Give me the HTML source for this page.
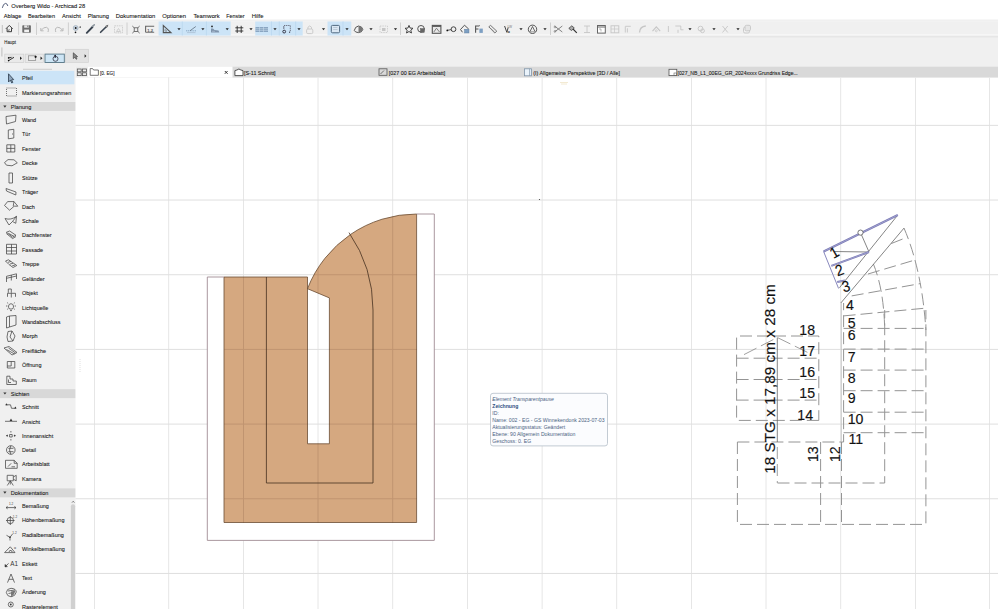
<!DOCTYPE html><html><head><meta charset="utf-8"><style>body{margin:0;width:998px;height:609px;overflow:hidden;background:#fff}svg{display:block;font-family:"Liberation Sans",sans-serif}</style></head><body>
<svg width="998" height="609" viewBox="0 0 998 609">
<rect x="0" y="0" width="998" height="19.5" fill="#ffffff"/>
<rect x="0" y="19.5" width="998" height="47.5" fill="#f0f0f0"/>
<line x1="0" y1="21.8" x2="998" y2="21.8" stroke="#f4f4f4" stroke-width="0.8"/>
<line x1="0" y1="34.8" x2="998" y2="34.8" stroke="#f8f8f8" stroke-width="1"/>
<line x1="0" y1="36.8" x2="998" y2="36.8" stroke="#e2e2e2" stroke-width="1"/>
<rect x="0" y="67" width="75.5" height="542" fill="#f0f0f0"/>
<rect x="75.5" y="66.7" width="922.5" height="10.9" fill="#d9d9d9"/>
<rect x="75.5" y="66.6" width="157" height="11" fill="#ffffff"/>
<path d="M2.3,7.9 Q3.3,3.4 5.6,3.4 Q7.4,3.6 7.8,6" fill="none" stroke="#46506e" stroke-width="0.9"/>
<text x="11.3" y="8.1" font-size="6.0" fill="#111" textLength="73.9" lengthAdjust="spacingAndGlyphs" stroke="#111" stroke-width="0.08" >Overberg Wido - Archicad 28</text>
<text x="3.8" y="18" font-size="6.1" fill="#111" textLength="17.5" lengthAdjust="spacingAndGlyphs" stroke="#111" stroke-width="0.08" >Ablage</text>
<text x="28" y="18" font-size="6.1" fill="#111" textLength="27.1" lengthAdjust="spacingAndGlyphs" stroke="#111" stroke-width="0.08" >Bearbeiten</text>
<text x="61.9" y="18" font-size="6.1" fill="#111" textLength="19.0" lengthAdjust="spacingAndGlyphs" stroke="#111" stroke-width="0.08" >Ansicht</text>
<text x="87.7" y="18" font-size="6.1" fill="#111" textLength="21.3" lengthAdjust="spacingAndGlyphs" stroke="#111" stroke-width="0.08" >Planung</text>
<text x="115.7" y="18" font-size="6.1" fill="#111" textLength="39.6" lengthAdjust="spacingAndGlyphs" stroke="#111" stroke-width="0.08" >Dokumentation</text>
<text x="162.3" y="18" font-size="6.1" fill="#111" textLength="23.8" lengthAdjust="spacingAndGlyphs" stroke="#111" stroke-width="0.08" >Optionen</text>
<text x="193.4" y="18" font-size="6.1" fill="#111" textLength="26.3" lengthAdjust="spacingAndGlyphs" stroke="#111" stroke-width="0.08" >Teamwork</text>
<text x="226.2" y="18" font-size="6.1" fill="#111" textLength="18.5" lengthAdjust="spacingAndGlyphs" stroke="#111" stroke-width="0.08" >Fenster</text>
<text x="251.7" y="18" font-size="6.1" fill="#111" textLength="11.7" lengthAdjust="spacingAndGlyphs" stroke="#111" stroke-width="0.08" >Hilfe</text>
<text x="4.3" y="43.8" font-size="5.0" fill="#111" textLength="11.6" lengthAdjust="spacingAndGlyphs" stroke="#111" stroke-width="0.06" >Haupt</text>
<line x1="1.9" y1="47.4" x2="1.9" y2="56.5" stroke="#b8b8b8" stroke-width="0.9"/>
<rect x="4.8" y="54.1" width="19" height="8.4" fill="#e9e9e9" stroke="#cfcfcf" stroke-width="0.7"/>
<rect x="25.2" y="54.1" width="18.1" height="8.4" fill="#e9e9e9" stroke="#cfcfcf" stroke-width="0.7"/>
<rect x="45" y="54.1" width="19.3" height="8.4" fill="#cde5f5" stroke="#567484" stroke-width="0.9"/>
<rect x="65.5" y="49.3" width="23.1" height="13.2" fill="#e2e2e2" stroke="#d2d2d2" stroke-width="0.7"/>
<rect x="8.5" y="55.3" width="5" height="3.6" fill="#dedede"/><path d="M8.6,60.6 L14,57.3 M8.4,57.9 L11.5,57.4" stroke="#222" stroke-width="0.9" fill="none"/><circle cx="8.6" cy="57.9" r="0.8" fill="#111"/><circle cx="8.6" cy="60.6" r="0.8" fill="#111"/>
<path d="M20,56.5 L22,58.3 L20,60 Z" fill="#222"/>
<rect x="28.5" y="55.8" width="7.2" height="4.8" fill="none" stroke="#888" stroke-width="0.7"/><circle cx="35.6" cy="56.8" r="1.1" fill="#111"/>
<path d="M40.5,56.5 L42.5,58.3 L40.5,60 Z" fill="#222"/>
<circle cx="55.5" cy="58.8" r="2.5" fill="none" stroke="#334" stroke-width="0.8"/><path d="M55.2,55 L55.2,58" stroke="#223" stroke-width="1"/><circle cx="55.2" cy="55.6" r="0.8" fill="#223"/>
<path d="M73.3,52.8 L73.3,58.6 L74.8,57.3 L76.2,59.3 L77,58.8 L75.8,56.8 L77.6,56.6 Z" fill="#8a8a8a" stroke="#333" stroke-width="0.6"/>
<path d="M84.6,54.3 L86.4,56 L84.6,57.7 Z" fill="#222"/>
<line x1="23" y1="69.3" x2="52" y2="69.3" stroke="#c4c4c4" stroke-width="0.8"/>
<line x1="2.3" y1="25" x2="2.3" y2="33" stroke="#bbb" stroke-width="0.9"/>
<line x1="18.6" y1="22.5" x2="18.6" y2="35" stroke="#c6c6c6" stroke-width="0.8"/>
<line x1="36.5" y1="22.5" x2="36.5" y2="35" stroke="#c6c6c6" stroke-width="0.8"/>
<line x1="68.4" y1="22.5" x2="68.4" y2="35" stroke="#c6c6c6" stroke-width="0.8"/>
<line x1="127" y1="22.5" x2="127" y2="35" stroke="#c6c6c6" stroke-width="0.8"/>
<line x1="400.5" y1="22.5" x2="400.5" y2="35" stroke="#c6c6c6" stroke-width="0.8"/>
<line x1="550.5" y1="22.5" x2="550.5" y2="35" stroke="#c6c6c6" stroke-width="0.8"/>
<rect x="158.6" y="21.5" width="72.1" height="14" fill="#cce4f7"/>
<rect x="255.2" y="21.5" width="47.5" height="14" fill="#cce4f7"/>
<rect x="327.5" y="21.5" width="23.8" height="14" fill="#cce4f7"/>
<line x1="182.3" y1="21.5" x2="182.3" y2="35.5" stroke="#b7d5ee" stroke-width="0.7"/>
<line x1="206.4" y1="21.5" x2="206.4" y2="35.5" stroke="#b7d5ee" stroke-width="0.7"/>
<line x1="271.5" y1="21.5" x2="271.5" y2="35.5" stroke="#b7d5ee" stroke-width="0.7"/>
<line x1="279.3" y1="21.5" x2="279.3" y2="35.5" stroke="#b7d5ee" stroke-width="0.7"/>
<line x1="295.6" y1="21.5" x2="295.6" y2="35.5" stroke="#b7d5ee" stroke-width="0.7"/>
<line x1="343" y1="21.5" x2="343" y2="35.5" stroke="#b7d5ee" stroke-width="0.7"/>
<path d="M177.4,28.3 L180.6,28.3 L179,30.3 Z" fill="#222"/>
<path d="M201.3,28.3 L204.5,28.3 L202.9,30.3 Z" fill="#222"/>
<path d="M225.6,28.3 L228.79999999999998,28.3 L227.2,30.3 Z" fill="#222"/>
<path d="M249.4,28.3 L252.6,28.3 L251,30.3 Z" fill="#222"/>
<path d="M273.4,28.3 L276.6,28.3 L275,30.3 Z" fill="#222"/>
<path d="M297.4,28.3 L300.6,28.3 L299,30.3 Z" fill="#222"/>
<path d="M321.9,28.3 L325.1,28.3 L323.5,30.3 Z" fill="#222"/>
<path d="M345.4,28.3 L348.6,28.3 L347,30.3 Z" fill="#222"/>
<path d="M369.4,28.3 L372.6,28.3 L371,30.3 Z" fill="#222"/>
<path d="M393.9,28.3 L397.1,28.3 L395.5,30.3 Z" fill="#222"/>
<path d="M519.4,28.3 L522.6,28.3 L521,30.3 Z" fill="#222"/>
<path d="M543.4,28.3 L546.6,28.3 L545,30.3 Z" fill="#222"/>
<path d="M688.4,28.3 L691.6,28.3 L690,30.3 Z" fill="#222"/>
<path d="M712.4,28.3 L715.6,28.3 L714,30.3 Z" fill="#222"/>
<path d="M736.4,28.3 L739.6,28.3 L738,30.3 Z" fill="#222"/>
<path d="M5.9,28.8 L9.3,25.4 L12.7,28.8 M7.1,28.2 L7.1,31.7 L11.5,31.7 L11.5,28.2" fill="none" stroke="#3a3a3a" stroke-width="1"/><path d="M8.6,31.5 L8.6,29.8 L10,29.8" fill="none" stroke="#555" stroke-width="0.6"/>
<rect x="22.3" y="25.2" width="8.6" height="7.6" rx="0.7" fill="#6e6e6e"/><rect x="24.2" y="25.3" width="4.6" height="2.4" fill="#e6e6e6"/><rect x="27.3" y="25.6" width="1" height="1.6" fill="#6e6e6e"/><rect x="24.2" y="29.6" width="4.8" height="2.6" fill="#f2f2f2"/>
<path d="M40.8,28 L40.8,30.8 L43.6,30.8 M41,30.6 Q43.5,26.8 46.5,27.3 Q49.3,28.3 48,32" fill="none" stroke="#b9b9b9" stroke-width="1"/>
<path d="M63,28 L63,30.8 L60.2,30.8 M62.8,30.6 Q60.3,26.8 57.3,27.3 Q54.5,28.3 55.8,32" fill="none" stroke="#b9b9b9" stroke-width="1"/>
<circle cx="75.7" cy="28" r="2.5" fill="#c8d4e0" stroke="#8a9aaa" stroke-width="0.5"/><circle cx="75.7" cy="28" r="0.9" fill="#111"/><circle cx="75.5" cy="32.4" r="0.8" fill="#111"/><path d="M79.2,27.2 L80.8,27" stroke="#333" stroke-width="0.7"/><path d="M80.5,26.5 L80.5,27.8" stroke="#333" stroke-width="0.6"/>
<path d="M86.8,32.8 L92.5,27" stroke="#3a4450" stroke-width="1.9" stroke-linecap="round"/><path d="M92.3,26.3 L94.3,24.8" stroke="#8a939c" stroke-width="1.5" stroke-linecap="round"/>
<path d="M100.6,32.3 L106,27" stroke="#3a4450" stroke-width="1.6" stroke-linecap="round"/><path d="M105.6,26.2 L108.2,25.2 M106.5,27.7 L107.8,26.2" stroke="#555" stroke-width="0.9"/>
<path d="M114.5,25.8 L122.5,25.8 L122.5,32.8 L114.5,32.8 Z" fill="none" stroke="#c6c6c6" stroke-width="0.8" stroke-dasharray="1.5,0.8"/><path d="M116.5,31.5 L118.5,28.5 L120.5,31.5 Z" fill="none" stroke="#c6c6c6" stroke-width="0.8"/>
<rect x="134.2" y="27.8" width="3.6" height="3.6" fill="none" stroke="#555" stroke-width="0.8"/><path d="M132.3,26 L134.2,27.8 M139.7,26 L137.8,27.8 M132.3,33.2 L134.2,31.4 M139.7,33.2 L137.8,31.4" stroke="#555" stroke-width="0.8"/>
<path d="M145.6,32.3 L145.6,26.3 L154.2,26.3" fill="none" stroke="#666" stroke-width="1.1"/><path d="M145.6,32.3 L154.2,32.3" stroke="#666" stroke-width="0.9"/><text x="147.3" y="31.6" font-size="4.1" fill="#555" font-weight="bold">1.2</text>
<path d="M163.3,25.6 L163.3,32.6 L171,32.6 Z" fill="none" stroke="#555" stroke-width="1.1"/><path d="M164.9,29.3 L164.9,31.2 L167,31.2 Z" fill="none" stroke="#777" stroke-width="0.6"/>
<path d="M186,30.8 L196,30.8" stroke="#6e8fb0" stroke-width="0.7" stroke-dasharray="1.2,0.6"/><path d="M187,32.6 L195.5,32.6" stroke="#a0b4c8" stroke-width="0.6"/><path d="M190,30.8 L195.8,26.5" stroke="#6a7a8a" stroke-width="0.9"/>
<circle cx="212" cy="26.4" r="0.9" fill="#222"/><path d="M211,28.5 L213,28.5 L214.5,30 L218.5,30.5 L219.3,32.5 L211,32.5 Z" fill="#8094ac"/><path d="M212,31.3 L215,31.3" stroke="#c5d5e5" stroke-width="0.5"/>
<path d="M237.2,25.8 L237.2,33 M241.2,25.8 L241.2,33 M235.3,27.8 L243.3,27.8 M235.3,31 L243.3,31" stroke="#2a2a2a" stroke-width="0.9"/>
<rect x="255.5" y="27" width="12.5" height="5" fill="#8aa6c2"/><path d="M255.5,28.7 L268,28.7 M255.5,30.4 L268,30.4 M259.5,27 L259.5,32 M263.5,27 L263.5,32" stroke="#cfe0f0" stroke-width="0.5"/>
<path d="M284,25.5 L290.3,25.5 L290.3,32" fill="none" stroke="#556" stroke-width="0.8" stroke-dasharray="1.3,0.8"/><path d="M283.8,26 L283.8,29" stroke="#556" stroke-width="0.8"/><circle cx="284.2" cy="31.6" r="1.4" fill="none" stroke="#334" stroke-width="1"/><circle cx="289.6" cy="32.2" r="0.6" fill="#334"/>
<rect x="306.6" y="29" width="6.2" height="4.6" rx="1.2" fill="none" stroke="#c6c6c6" stroke-width="0.9"/><path d="M307.9,29 L307.9,27.3 Q309.7,24.6 311.5,27.3 L311.5,29" fill="none" stroke="#c6c6c6" stroke-width="0.9"/>
<rect x="331.3" y="25.4" width="8.3" height="7.4" rx="1.2" fill="#dbe8f4" stroke="#4f6880" stroke-width="1"/><path d="M333.2,27.5 L337.5,27.5 M333.2,29.5 L337.5,29.5" stroke="#9ab" stroke-width="0.5"/>
<path d="M354.3,30.5 Q355,26.5 358.5,26 Q362.5,26.5 362.8,29.5 Q362,32.5 358.5,32.6 Q355,32.4 354.3,30.5 Z" fill="none" stroke="#444" stroke-width="0.9"/><path d="M358.5,26.3 Q362.3,26.8 362.5,29.5 Q361.8,32.2 358.5,32.3 Z" fill="#777"/>
<rect x="380" y="26" width="7.5" height="6.5" fill="none" stroke="#c6c6c6" stroke-width="0.8" stroke-dasharray="1.4,1"/><rect x="382" y="28" width="3.5" height="3" fill="#c6c6c6"/>
<polygon points="409.00,25.40 410.12,28.06 412.99,28.30 410.81,30.19 411.47,33.00 409.00,31.50 406.53,33.00 407.19,30.19 405.01,28.30 407.88,28.06" fill="none" stroke="#333" stroke-width="0.9" stroke-linejoin="round"/>
<circle cx="421" cy="28.8" r="3.3" fill="none" stroke="#555" stroke-width="1"/><rect x="420.5" y="28.6" width="3.8" height="3.8" fill="#666" stroke="#444" stroke-width="0.4"/>
<rect x="432.3" y="25.4" width="8.6" height="7.9" fill="#e8e8e8" stroke="#555" stroke-width="1.1"/><path d="M432.3,26.3 L440.9,26.3" stroke="#555" stroke-width="1.2"/><path d="M433.8,32 L436.5,28.2 L439.5,32" fill="none" stroke="#666" stroke-width="0.8"/>
<circle cx="453.5" cy="29.2" r="2.4" fill="none" stroke="#333" stroke-width="0.9"/><path d="M447.5,30.3 L451.2,29.6" stroke="#333" stroke-width="0.8"/><circle cx="447.3" cy="30.4" r="0.9" fill="#111"/>
<path d="M460.5,29.5 L464.5,25.2 L468.8,29.2 M460.5,29.5 L462.5,32.3" fill="none" stroke="#444" stroke-width="0.9"/><rect x="464.5" y="29.2" width="4.5" height="3.8" fill="#7d9fc2" stroke="#5a7a9a" stroke-width="0.4"/>
<path d="M475.6,32.7 L475.6,26 L479.3,26 M475.6,29 L478.5,29" fill="none" stroke="#555" stroke-width="1.1"/><path d="M479,25.5 L479.8,25.5" stroke="#555" stroke-width="0.7"/><rect x="479.4" y="28.6" width="3.4" height="4.3" fill="#7d9fc2"/>
<path d="M488.8,26.8 L490.6,25.4 L496.8,31.2 L494.8,33 Z" fill="none" stroke="#666" stroke-width="0.9"/><path d="M490.5,28 L494.5,31.5" stroke="#999" stroke-width="0.5"/>
<path d="M504.6,26 L506.8,32.3 L508.2,27.5" fill="none" stroke="#444" stroke-width="1"/><text x="507.4" y="28.3" font-size="3.2" fill="#777">LW</text><text x="507.6" y="32.6" font-size="3.8" fill="#333" font-weight="bold">α</text>
<circle cx="532.5" cy="29.3" r="4.2" fill="none" stroke="#444" stroke-width="0.9"/><path d="M530,31.6 L532.5,26.5 L535,31.6" fill="none" stroke="#444" stroke-width="0.8"/><path d="M530,31.8 L535,31.8" stroke="#888" stroke-width="0.8"/>
<path d="M554.5,26 L562.3,32 M554.5,32 L562.3,26" stroke="#777" stroke-width="0.9"/><circle cx="555" cy="27" r="0.9" fill="none" stroke="#777" stroke-width="0.6"/><circle cx="555" cy="31.3" r="0.9" fill="none" stroke="#777" stroke-width="0.6"/>
<path d="M568.8,28.4 L571.8,25.8 L574.3,28 L571.5,30.5 Z" fill="#aaa" stroke="#444" stroke-width="0.8"/><path d="M573,29 L576.8,32.8" stroke="#333" stroke-width="1.1"/>
<path d="M584,26 L590,26 M587,26 L587,32.5 M584,32.5 L590,32.5" stroke="#c6c6c6" stroke-width="0.9"/>
<rect x="597.5" y="25.5" width="7.8" height="7.6" fill="#fff" stroke="#666" stroke-width="1"/><path d="M597.5,27 L605.3,27" stroke="#666" stroke-width="1"/><path d="M599,29 L601,29 L601,31.5" fill="none" stroke="#888" stroke-width="0.6"/>
<rect x="611" y="25.8" width="7.8" height="7" fill="none" stroke="#c6c6c6" stroke-width="0.9"/><path d="M611,29 L618.8,29 M614.5,25.8 L614.5,32.8" stroke="#c6c6c6" stroke-width="0.7"/>
<path d="M625.3,32.5 L625.3,26.3 L630.8,26.3 M627.4,32.5 L627.4,28.3" fill="none" stroke="#c6c6c6" stroke-width="0.9"/>
<path d="M639.5,32.5 Q639.8,26.5 645.8,26" fill="none" stroke="#c6c6c6" stroke-width="1.3"/>
<path d="M652.5,31.2 L656.3,26.8 L660.2,31.2" fill="none" stroke="#c6c6c6" stroke-width="1.1"/><circle cx="656.3" cy="30.8" r="1" fill="none" stroke="#c6c6c6" stroke-width="0.7"/>
<path d="M668.4,26 L668.4,32" stroke="#c6c6c6" stroke-width="0.9"/>
<path d="M675.3,26 L680.8,26 L680.8,29.8 L683.5,29.8 M678,29.8 L678,32.8" fill="none" stroke="#c6c6c6" stroke-width="0.9"/>
<circle cx="700.5" cy="28.6" r="2.4" fill="none" stroke="#c6c6c6" stroke-width="0.9"/><circle cx="702.5" cy="30.8" r="1.9" fill="none" stroke="#c6c6c6" stroke-width="0.9"/>
<path d="M722.5,26 L727.8,32.5 M727.8,26 L722.5,32.5" stroke="#c6c6c6" stroke-width="0.9"/>
<rect x="743.5" y="27.2" width="6" height="5.8" rx="1.4" fill="none" stroke="#c6c6c6" stroke-width="0.9"/><rect x="745" y="25.3" width="5.5" height="5.5" rx="1.4" fill="#e6e6e6" stroke="#c6c6c6" stroke-width="0.9"/>
<rect x="75.8" y="66.6" width="12" height="10.7" fill="#ebebeb"/>
<g fill="none" stroke="#555" stroke-width="0.8">
<rect x="77.3" y="69" width="3.9" height="2.8"/><rect x="82.5" y="69" width="3.9" height="2.8"/><rect x="77.3" y="72.8" width="3.9" height="2.8"/><rect x="82.5" y="72.8" width="3.9" height="2.8"/>
<path d="M90.2,75.3 L90.2,68.6 L92.6,68.6 L93.6,70 L98.4,70 L98.4,75.3 Z"/>
<path d="M234.9,75.6 L234.9,70.6 Q237,70.2 238.9,69 Q240.9,70.2 243,70.6 L243,75.6 Z" fill="#fff" stroke="#444" stroke-width="0.9"/>
<rect x="379" y="68.8" width="8" height="6.5"/><path d="M380.5,74 L384,70.5" />
<rect x="524.6" y="68.8" width="6.8" height="7" fill="#eaf3fb" stroke="#7f93a8"/><path d="M529.6,68.8 L529.6,75.8" stroke="#7f93a8" stroke-width="0.7"/>
<rect x="669" y="69.3" width="7.8" height="6.3" fill="#fff"/><rect x="674" y="73" width="2.6" height="2.5" fill="none" stroke="#666" stroke-width="0.6"/>
</g>
<path d="M224.8,71 L227.6,73.8 M227.6,71 L224.8,73.8" stroke="#222" stroke-width="0.9"/>
<text x="99.9" y="75.2" font-size="6.0" fill="#111" textLength="14.6" lengthAdjust="spacingAndGlyphs" stroke="#111" stroke-width="0.08" >[0. EG]</text>
<text x="244" y="75.2" font-size="6.0" fill="#111" textLength="31.6" lengthAdjust="spacingAndGlyphs" stroke="#111" stroke-width="0.08" >[S-11 Schnitt]</text>
<text x="388.8" y="75.2" font-size="6.0" fill="#111" textLength="56.5" lengthAdjust="spacingAndGlyphs" stroke="#111" stroke-width="0.08" >[027 00 EG Arbeitsblatt]</text>
<text x="533.2" y="75.2" font-size="6.0" fill="#111" textLength="86.8" lengthAdjust="spacingAndGlyphs" stroke="#111" stroke-width="0.08" >(I) Allgemeine Perspektive [3D / Alle]</text>
<text x="677.6" y="75.2" font-size="6.0" fill="#111" textLength="120.2" lengthAdjust="spacingAndGlyphs" stroke="#111" stroke-width="0.08" >[027_NB_L1_00EG_GR_2024xxxx Grundriss Edge...</text>
<rect x="0" y="70.8" width="74.3" height="13.5" fill="#cce4f7"/>
<rect x="0" y="102" width="75.3" height="8.9" fill="#d8d8d8"/>
<rect x="0" y="389.2" width="75.3" height="8.9" fill="#d8d8d8"/>
<rect x="0" y="488.4" width="75.3" height="8.9" fill="#d8d8d8"/>
<path d="M3.3,105.60000000000001 L6.5,105.60000000000001 L4.9,107.8 Z" fill="#333"/>
<text x="10.8" y="108.7" font-size="6.0" fill="#141414" textLength="20.55" lengthAdjust="spacingAndGlyphs" stroke="#141414" stroke-width="0.08" >Planung</text>
<path d="M3.3,392.4 L6.5,392.4 L4.9,394.6 Z" fill="#333"/>
<text x="10.8" y="395.5" font-size="6.0" fill="#141414" textLength="18.68" lengthAdjust="spacingAndGlyphs" stroke="#141414" stroke-width="0.08" >Sichten</text>
<path d="M3.3,491.59999999999997 L6.5,491.59999999999997 L4.9,493.8 Z" fill="#333"/>
<text x="10.8" y="494.7" font-size="6.0" fill="#141414" textLength="37.66" lengthAdjust="spacingAndGlyphs" stroke="#141414" stroke-width="0.08" >Dokumentation</text>
<text x="22" y="80.2" font-size="6.0" fill="#141414" textLength="10.7" lengthAdjust="spacingAndGlyphs" stroke="#141414" stroke-width="0.08" >Pfeil</text>
<text x="22" y="94.6" font-size="6.0" fill="#141414" textLength="49.35" lengthAdjust="spacingAndGlyphs" stroke="#141414" stroke-width="0.08" >Markierungsrahmen</text>
<text x="22" y="122.0" font-size="6.0" fill="#141414" textLength="14.16" lengthAdjust="spacingAndGlyphs" stroke="#141414" stroke-width="0.08" >Wand</text>
<text x="22" y="136.43" font-size="6.0" fill="#141414" textLength="8.25" lengthAdjust="spacingAndGlyphs" stroke="#141414" stroke-width="0.08" >Tür</text>
<text x="22" y="150.86" font-size="6.0" fill="#141414" textLength="18.64" lengthAdjust="spacingAndGlyphs" stroke="#141414" stroke-width="0.08" >Fenster</text>
<text x="22" y="165.29" font-size="6.0" fill="#141414" textLength="15.59" lengthAdjust="spacingAndGlyphs" stroke="#141414" stroke-width="0.08" >Decke</text>
<text x="22" y="179.72" font-size="6.0" fill="#141414" textLength="15.59" lengthAdjust="spacingAndGlyphs" stroke="#141414" stroke-width="0.08" >Stütze</text>
<text x="22" y="194.15" font-size="6.0" fill="#141414" textLength="15.99" lengthAdjust="spacingAndGlyphs" stroke="#141414" stroke-width="0.08" >Träger</text>
<text x="22" y="208.58" font-size="6.0" fill="#141414" textLength="12.84" lengthAdjust="spacingAndGlyphs" stroke="#141414" stroke-width="0.08" >Dach</text>
<text x="22" y="223.01" font-size="6.0" fill="#141414" textLength="16.82" lengthAdjust="spacingAndGlyphs" stroke="#141414" stroke-width="0.08" >Schale</text>
<text x="22" y="237.44" font-size="6.0" fill="#141414" textLength="29.65" lengthAdjust="spacingAndGlyphs" stroke="#141414" stroke-width="0.08" >Dachfenster</text>
<text x="22" y="251.87" font-size="6.0" fill="#141414" textLength="21.09" lengthAdjust="spacingAndGlyphs" stroke="#141414" stroke-width="0.08" >Fassade</text>
<text x="22" y="266.3" font-size="6.0" fill="#141414" textLength="17.22" lengthAdjust="spacingAndGlyphs" stroke="#141414" stroke-width="0.08" >Treppe</text>
<text x="22" y="280.73" font-size="6.0" fill="#141414" textLength="22.62" lengthAdjust="spacingAndGlyphs" stroke="#141414" stroke-width="0.08" >Geländer</text>
<text x="22" y="295.16" font-size="6.0" fill="#141414" textLength="15.9" lengthAdjust="spacingAndGlyphs" stroke="#141414" stroke-width="0.08" >Objekt</text>
<text x="22" y="309.59" font-size="6.0" fill="#141414" textLength="26.3" lengthAdjust="spacingAndGlyphs" stroke="#141414" stroke-width="0.08" >Lichtquelle</text>
<text x="22" y="324.02" font-size="6.0" fill="#141414" textLength="38.62" lengthAdjust="spacingAndGlyphs" stroke="#141414" stroke-width="0.08" >Wandabschluss</text>
<text x="22" y="338.45" font-size="6.0" fill="#141414" textLength="15.59" lengthAdjust="spacingAndGlyphs" stroke="#141414" stroke-width="0.08" >Morph</text>
<text x="22" y="352.88" font-size="6.0" fill="#141414" textLength="24.15" lengthAdjust="spacingAndGlyphs" stroke="#141414" stroke-width="0.08" >Freifläche</text>
<text x="22" y="367.31" font-size="6.0" fill="#141414" textLength="19.47" lengthAdjust="spacingAndGlyphs" stroke="#141414" stroke-width="0.08" >Öffnung</text>
<text x="22" y="381.74" font-size="6.0" fill="#141414" textLength="14.67" lengthAdjust="spacingAndGlyphs" stroke="#141414" stroke-width="0.08" >Raum</text>
<text x="22" y="409.2" font-size="6.0" fill="#141414" textLength="16.81" lengthAdjust="spacingAndGlyphs" stroke="#141414" stroke-width="0.08" >Schnitt</text>
<text x="22" y="423.5" font-size="6.0" fill="#141414" textLength="18.04" lengthAdjust="spacingAndGlyphs" stroke="#141414" stroke-width="0.08" >Ansicht</text>
<text x="22" y="437.8" font-size="6.0" fill="#141414" textLength="31.19" lengthAdjust="spacingAndGlyphs" stroke="#141414" stroke-width="0.08" >Innenansicht</text>
<text x="22" y="452.1" font-size="6.0" fill="#141414" textLength="14.06" lengthAdjust="spacingAndGlyphs" stroke="#141414" stroke-width="0.08" >Detail</text>
<text x="22" y="466.4" font-size="6.0" fill="#141414" textLength="27.51" lengthAdjust="spacingAndGlyphs" stroke="#141414" stroke-width="0.08" >Arbeitsblatt</text>
<text x="22" y="480.7" font-size="6.0" fill="#141414" textLength="19.26" lengthAdjust="spacingAndGlyphs" stroke="#141414" stroke-width="0.08" >Kamera</text>
<text x="22" y="508.0" font-size="6.0" fill="#141414" textLength="26.9" lengthAdjust="spacingAndGlyphs" stroke="#141414" stroke-width="0.08" >Bemaßung</text>
<text x="22" y="522.39" font-size="6.0" fill="#141414" textLength="42.5" lengthAdjust="spacingAndGlyphs" stroke="#141414" stroke-width="0.08" >Höhenbemaßung</text>
<text x="22" y="536.78" font-size="6.0" fill="#141414" textLength="41.88" lengthAdjust="spacingAndGlyphs" stroke="#141414" stroke-width="0.08" >Radialbemaßung</text>
<text x="22" y="551.17" font-size="6.0" fill="#141414" textLength="42.79" lengthAdjust="spacingAndGlyphs" stroke="#141414" stroke-width="0.08" >Winkelbemaßung</text>
<text x="22" y="565.56" font-size="6.0" fill="#141414" textLength="15.28" lengthAdjust="spacingAndGlyphs" stroke="#141414" stroke-width="0.08" >Etikett</text>
<text x="22" y="579.95" font-size="6.0" fill="#141414" textLength="10.09" lengthAdjust="spacingAndGlyphs" stroke="#141414" stroke-width="0.08" >Text</text>
<text x="22" y="594.34" font-size="6.0" fill="#141414" textLength="23.85" lengthAdjust="spacingAndGlyphs" stroke="#141414" stroke-width="0.08" >Änderung</text>
<text x="22" y="608.73" font-size="6.0" fill="#141414" textLength="35.76" lengthAdjust="spacingAndGlyphs" stroke="#141414" stroke-width="0.08" >Rasterelement</text>
<rect x="70.9" y="504.3" width="4.2" height="110" fill="#d0d0d0" rx="2"/>
<path d="M72,502.6 L73.2,501.3 L74.4,502.6" fill="none" stroke="#444" stroke-width="0.7"/>
<g fill="none" stroke="#444" stroke-width="0.75">
<path d="M8.5,73.8 L8.5,82 L10.3,80.2 L11.8,83 L12.8,82.4 L11.5,79.8 L13.7,79.6 Z" fill="#8fa6bd" stroke="#2a3a4a" stroke-width="0.8"/>
<rect x="6.5" y="88" width="10" height="8" stroke-dasharray="1,1"/>
<path d="M6,116.5 L16,115.2 L15.5,121.5 L6.5,124 Z"/>
<path d="M8.3,130 L13.8,129.3 L13.8,138 L8.3,138.8 Z M12.5,133.5 L12.5,134.5"/>
<path d="M6.8,144.8 L14.8,144.8 L14.8,152 L6.8,152 Z M10.8,144.8 L10.8,152 M6.8,148.4 L14.8,148.4"/>
<path d="M4.5,162.6 L8,159.6 L14,159.8 L17.3,162.8 L12,165.8 L6.5,165.2 Z"/>
<path d="M9,173 L12.5,173 L12.5,183 L9,183 Z"/>
<path d="M6,188.5 L16,192 L15.8,195 L6.5,191 Z"/>
<path d="M4.5,205.5 L7.6,201.6 L14,201.6 L17.8,206.2 L14.2,206.2 L9.6,210.2 Z M14,201.6 L13.2,206.2"/>
<path d="M5,218.5 Q11,220.5 16.5,216.3 M5,218.5 L9,225 L12.5,221.5 L15.8,223.3 L16.5,216.3 M16.5,216.3 L12.5,221.5"/>
<path d="M6.3,232.3 L9.6,231 L16,235.3 L12.6,237.2 Z M8.4,233.3 L14,236.3 M6.3,233.5 L12.6,238.6 L16,236.5"/>
<path d="M6.5,244.3 L16.5,244.3 L16.5,254 L6.5,254 Z M11.5,244.3 L11.5,254 M6.5,247.5 L16.5,247.5 M6.5,251 L16.5,251"/>
<path d="M5.5,261 L8.5,259.8 L12.5,262.5 L16.8,265.5 L13,267.5 L9,264.5 Z M8,262.3 L10.8,261.5 M10,264 L13,263.3 M12.2,265.8 L15.2,265"/>
<path d="M6.5,276.3 L16.5,273.8 M6.5,276.3 L6.5,282 M11.3,275 L11.3,280.5 M16.5,273.8 L16.5,279 M6.5,278.3 L16.5,276"/>
<path d="M8.3,292.8 L8.3,289 L11.3,289 L11.3,292.8 M7.5,296.8 L7.5,293.3 L15.5,293.3 L15.5,296.8 M11.3,293.3 L11.3,297.5"/>
<path d="M9.6,309 Q8.3,307.8 8.5,306 Q9,303.8 11,303.7 Q13,303.8 13.5,306 Q13.7,307.8 12.4,309 Z M10,310.6 L12,310.6 M6,306 L7.3,306 M14.7,306 L16,306 M7.2,302.6 L8.2,303.5 M14.8,302.6 L13.8,303.5 M7.2,309.4 L8.2,308.6 M14.8,309.4 L13.8,308.6"/>
<path d="M6.5,317 L9.5,316 L9.5,327 L6.5,328 Z M9.5,316 L16,315.5 L16,325 L9.5,327"/>
<path d="M8,331.5 L12,331 L15,336 L13,341 L8,341.5 L7,337 Z M12,331 L10,337 L13,341"/>
<path d="M4,348 L9,346.5 L17,352.5 L12,355 Z M6.5,349.5 L14.5,354 M8.5,348 L15.5,353"/>
<path d="M7.3,361.5 L14.8,361.5 L14.8,368 L7.3,368 Z M11.2,361.5 L11.2,366 L7.3,366"/>
<path d="M6.8,376.2 L10,376.2 L10,379 L13,379 L13,381 L16.3,381 L16.3,384.5 L6.8,384.5 Z M8.5,379.5 L8.5,382.5 L11,382.5"/>
<path d="M6,404.8 L10.5,404.8 L11.5,408.3 L16,408.3"/>
<path d="M5,421.3 L17,421.3"/>
<path d="M9.6,434.5 L12.2,434.5 L12.2,437 L9.6,437 Z M10.9,431 L10.9,432.5 M10.9,439 L10.9,440.5 M6.5,435.7 L8,435.7 M13.8,435.7 L15.3,435.7"/>
<path d="M6.5,450 a4.3,4.3 0 1 0 8.6,0 a4.3,4.3 0 1 0 -8.6,0 M8.3,448.3 L13.5,448.3 M8.3,451.7 L13.5,451.7 M10.8,445.7 Q8.3,450 10.8,454.3"/>
<path d="M5.5,460.3 L14.2,460.3 L17.2,463.3 L17.2,468.3 L5.5,468.3 Z M8,466.6 L11.2,463.3 M11.5,466.8 L15,466.8 M14.2,460.3 L14.2,463.3 L17.2,463.3"/>
<path d="M7.2,475.3 L13.3,475.3 L13.3,480.8 L7.2,480.8 Z M13.3,477 L16.2,475.3 L16.2,480.8 L13.3,479.2 M10.3,480.8 L7.3,485.5 M10.3,480.8 L13.3,485.5 M10.3,480.8 L10.3,484.5"/>
<path d="M6,507.6 L16,507.6 M7.6,506.4 L6,507.6 L7.6,508.8 M14.4,506.4 L16,507.6 L14.4,508.8"/>
<path d="M7.1,520.5 a3.2,3.2 0 1 0 6.4,0 a3.2,3.2 0 1 0 -6.4,0 M10.3,516 L10.3,525 M6,520.5 L14.6,520.5"/>
<path d="M6.5,535.3 L10,537.3 L12.5,534 M10,537.3 L10,540.5"/>
<path d="M4.6,552.6 L10.3,546.8 L15,552.6 Z"/>
<path d="M5,566.8 L8.6,563.4 M5,566.8 L7.6,566.6 M5,566.8 L5.2,564.2"/>
<path d="M7.5,582.6 L11,574 L14.5,582.6 M8.8,579.3 L13.2,579.3"/>
<path d="M6.3,592.5 Q6.8,588.5 11,588.3 Q16,588.5 16.3,592 Q15.5,596.2 11,596.8 Q7,596.5 6.3,592.5 Z M8,591 L15,590 M8.5,593.5 L12,592.8 L12,596.5"/>
<path d="M8.3,604.5 a2.5,2.5 0 1 0 5,0 a2.5,2.5 0 1 0 -5,0"/>
</g>
<path d="M5.2,405.2 L6.4,403.2 L7.6,405.2 Z M14.2,408.6 L15.4,406.6 L16.6,408.6 Z M9.6,421 L11,418.6 L12.4,421 Z M6,435.7 L7.6,434.6 L7.6,436.8 Z M15.8,435.7 L14.2,434.6 L14.2,436.8 Z" fill="#333"/>
<text x="9" y="505" font-size="3.1" fill="#444">1.2</text>
<text x="12.8" y="517.6" font-size="3.1" fill="#444">1.2</text>
<text x="12.3" y="534" font-size="3.1" fill="#444">1.2</text>
<text x="14" y="549" font-size="3.6" fill="#444">α</text>
<circle cx="10" cy="537.3" r="0.8" fill="#222"/>
<path d="M8.8,551.5 Q10.5,549.5 12.4,551.5" fill="none" stroke="#333" stroke-width="0.9"/>
<text x="10.3" y="565.6" font-size="6.3" fill="#333">A1</text>
<path d="M5,566.8 L7.2,566.3 L5.5,564.6 Z" fill="#222"/>
<path d="M11,591.5 L15.5,590.5 L14,594.5 L11,596 Z" fill="#777"/>
<circle cx="10.8" cy="604.5" r="0.9" fill="#333"/>
<g stroke="#e6e6e6" stroke-width="1">
<line x1="94.47" y1="77.3" x2="94.47" y2="609"/>
<line x1="168.70" y1="77.3" x2="168.70" y2="609"/>
<line x1="243.50" y1="77.3" x2="243.50" y2="609"/>
<line x1="318.00" y1="77.3" x2="318.00" y2="609"/>
<line x1="392.70" y1="77.3" x2="392.70" y2="609"/>
<line x1="467.50" y1="77.3" x2="467.50" y2="609"/>
<line x1="542.15" y1="77.3" x2="542.15" y2="609"/>
<line x1="616.66" y1="77.3" x2="616.66" y2="609"/>
<line x1="691.50" y1="77.3" x2="691.50" y2="609"/>
<line x1="766.00" y1="77.3" x2="766.00" y2="609"/>
<line x1="840.70" y1="77.3" x2="840.70" y2="609"/>
<line x1="915.50" y1="77.3" x2="915.50" y2="609"/>
<line x1="989.47" y1="77.3" x2="989.47" y2="609"/>
</g>
<g stroke="#dfdfdf" stroke-width="1">
<line x1="75.5" y1="125.36" x2="998" y2="125.36"/>
<line x1="75.5" y1="200.04" x2="998" y2="200.04"/>
<line x1="75.5" y1="274.72" x2="998" y2="274.72"/>
<line x1="75.5" y1="349.40" x2="998" y2="349.40"/>
<line x1="75.5" y1="424.08" x2="998" y2="424.08"/>
<line x1="75.5" y1="498.76" x2="998" y2="498.76"/>
<line x1="75.5" y1="573.44" x2="998" y2="573.44"/>
</g>
<circle cx="539.5" cy="199.5" r="0.6" fill="#444"/>
<path d="M80,359 L80,372" stroke="#e4e4e4" stroke-width="1.2" stroke-dasharray="1,1"/>
<path d="M560,82.5 L568,82.5 M561,84 L567,84" stroke="#f0e4c8" stroke-width="0.8"/>
<defs><clipPath id="brc"><path d="M224,277 L307.5,277 L307.5,443.8 L329.4,443.8 L329.4,297.9 L307.5,288.7 A117.0,117.0 0 0 1 416.6,214 L416.6,522.5 L224,522.5 Z"/></clipPath></defs>
<path d="M207.3,277 L224,277 L224,522.5 L416.6,522.5 L416.6,214 L434.3,214 L434.3,540.4 L207.3,540.4 Z" fill="#fff"/>
<path d="M224,277 L307.5,277 L307.5,443.8 L329.4,443.8 L329.4,297.9 L307.5,288.7 A117.0,117.0 0 0 1 416.6,214 L416.6,522.5 L224,522.5 Z" fill="#d5a880"/>
<g stroke="#c09470" stroke-width="1" clip-path="url(#brc)">
<line x1="243.50" y1="200" x2="243.50" y2="530"/>
<line x1="318.00" y1="200" x2="318.00" y2="530"/>
<line x1="392.70" y1="200" x2="392.70" y2="530"/>
<line x1="220" y1="274.72" x2="420" y2="274.72"/>
<line x1="220" y1="349.40" x2="420" y2="349.40"/>
<line x1="220" y1="424.08" x2="420" y2="424.08"/>
<line x1="220" y1="498.76" x2="420" y2="498.76"/>
</g>
<path d="M224,277 L307.5,277 L307.5,443.8 L329.4,443.8 L329.4,297.9 L307.5,288.7 A117.0,117.0 0 0 1 416.6,214 L416.6,522.5 L224,522.5 Z" fill="none" stroke="#6a4c34" stroke-width="0.8"/>
<path d="M224,277 L207.3,277 L207.3,540.4 L434.3,540.4 L434.3,214 L416.6,214" fill="none" stroke="#a08c94" stroke-width="0.9"/>
<path d="M266.4,277 L266.4,483 L373,483 L373,310 A136,136 0 0 0 349,232.6" fill="none" stroke="#45301f" stroke-width="0.8"/>
<rect x="490.5" y="393.3" width="117" height="52.6" rx="2.5" fill="#fbfcfe" stroke="#bcc5ce" stroke-width="0.9"/>
<text x="492.3" y="401.1" font-size="5.15" fill="#4a6282" font-style="italic" >Element Transparentpause</text>
<text x="492.3" y="408.0" font-size="5.15" fill="#2f4f80" font-weight="bold" >Zeichnung</text>
<text x="492.3" y="415.0" font-size="5.15" fill="#4a6282" >ID:</text>
<text x="492.3" y="422.2" font-size="5.15" fill="#4a6282" >Name: 002 - EG - GS Winnekendonk 2023-07-03</text>
<text x="492.3" y="429.2" font-size="5.15" fill="#4a6282" >Aktualisierungsstatus: Geändert</text>
<text x="492.3" y="436.2" font-size="5.15" fill="#4a6282" >Ebene: 90 Allgemein Dokumentation</text>
<text x="492.3" y="443.2" font-size="5.15" fill="#4a6282" >Geschoss: 0. EG</text>
<g fill="none" stroke="#949494" stroke-width="1" stroke-dasharray="12,5">
<path d="M737.4,442 L737.4,524.4 L925.9,524.4 L925.9,310"/>
<path d="M818.8,420.4 L736.6,420.4 L736.6,336 L818.8,336 Z"/>
<line x1="736.6" y1="358.2" x2="818.8" y2="358.2"/>
<line x1="736.6" y1="379.5" x2="818.8" y2="379.5"/>
<line x1="736.6" y1="400.1" x2="818.8" y2="400.1"/>
<path d="M777.5,483 L884.7,483 L884.7,310"/>
<path d="M737.4,442 L843.6,442 L843.6,303"/>
<line x1="820.6" y1="442" x2="820.6" y2="524.4"/>
<line x1="841.5" y1="442" x2="841.5" y2="524.4"/>
<line x1="843.6" y1="328.4" x2="925.6" y2="328.4"/>
<line x1="843.6" y1="349.1" x2="925.6" y2="349.1"/>
<line x1="843.6" y1="370.1" x2="925.6" y2="370.1"/>
<line x1="843.6" y1="390.7" x2="925.6" y2="390.7"/>
<line x1="843.6" y1="412.2" x2="925.6" y2="412.2"/>
<line x1="843.6" y1="432.7" x2="925.6" y2="432.7"/>
<line x1="843.6" y1="315.9" x2="925" y2="308.2"/>
<line x1="891.4" y1="243.5" x2="907.7" y2="237"/>
<line x1="868" y1="274" x2="915" y2="260"/>
<line x1="851.7" y1="295.9" x2="920.3" y2="283.6"/>
<path d="M904,228.1 Q922,270 925.9,330"/>
<path d="M873.4,264 Q884,290 884.7,330"/>
</g>
<path d="M744,354.6 L777.3,337.5 L808,352.6" fill="none" stroke="#777" stroke-width="0.7" stroke-dasharray="14,5"/>
<g fill="none" stroke="#666" stroke-width="0.8">
<line x1="777.3" y1="337.5" x2="777.3" y2="442"/>
<line x1="777.3" y1="442" x2="777.3" y2="483" stroke="#888" stroke-dasharray="12,5" stroke-dashoffset="-5"/>
<line x1="897.8" y1="215" x2="839.4" y2="287.8"/>
<line x1="904" y1="228.1" x2="840.8" y2="303"/>
<line x1="860.5" y1="232.6" x2="869" y2="252"/>
<line x1="834" y1="251.5" x2="869" y2="252"/>
</g>
<line x1="841.3" y1="303" x2="841.3" y2="442" stroke="#bbb" stroke-width="0.8"/>
<g fill="none" stroke="#7878b4" stroke-width="2.0">
<line x1="823.6" y1="251.5" x2="897.8" y2="215"/>
<line x1="831.3" y1="265.9" x2="869" y2="252"/>
<line x1="837.2" y1="282.1" x2="845" y2="280.5"/>
</g>
<g fill="none" stroke="#c4c4e4" stroke-width="0.5">
<line x1="823.6" y1="251.5" x2="897.8" y2="215"/>
<line x1="831.3" y1="265.9" x2="869" y2="252"/>
<line x1="837.2" y1="282.1" x2="845" y2="280.5"/>
</g>
<line x1="823.6" y1="251.5" x2="838.6" y2="288.5" stroke="#7c7cb6" stroke-width="0.9"/>
<circle cx="860.5" cy="232.6" r="2.6" fill="#fff" stroke="#555" stroke-width="0.8"/>
<g font-size="14.2" fill="#111" stroke="#111" stroke-width="0.15">
<text font-size="15.4" transform="translate(846,309.5) scale(0.92,1)">4</text>
<text font-size="15.4" transform="translate(847.7,327.6) scale(0.92,1)">5</text>
<text font-size="15.4" transform="translate(847.7,340.3) scale(0.92,1)">6</text>
<text font-size="15.4" transform="translate(847.7,362) scale(0.92,1)">7</text>
<text font-size="15.4" transform="translate(847.7,383) scale(0.92,1)">8</text>
<text font-size="15.4" transform="translate(847.7,403.2) scale(0.92,1)">9</text>
<text font-size="15.4" transform="translate(847.7,423.7) scale(0.92,1)">10</text>
<text font-size="15.4" transform="translate(848.5,444.4) scale(0.92,1)">11</text>
<text font-size="15.4" transform="translate(799.3,334.5) scale(0.92,1)">18</text>
<text font-size="15.4" transform="translate(799.3,356) scale(0.92,1)">17</text>
<text font-size="15.4" transform="translate(799.3,376.8) scale(0.92,1)">16</text>
<text font-size="15.4" transform="translate(799.3,398) scale(0.92,1)">15</text>
<text font-size="15.4" transform="translate(797.3,420) scale(0.92,1)">14</text>
<text font-size="15.4" transform="translate(818,462) rotate(-90) scale(0.92,1)">13</text>
<text font-size="15.4" transform="translate(840,462) rotate(-90) scale(0.92,1)">12</text>
<text font-size="15.4" transform="translate(833.5,259) rotate(-30) scale(0.92,1)">1</text>
<text font-size="15.4" transform="translate(837.5,276.5) rotate(-20) scale(0.92,1)">2</text>
<text font-size="15.4" transform="translate(843.5,292.5) rotate(-15) scale(0.92,1)">3</text>
<text font-size="15.3" transform="translate(774.5,473.8) rotate(-90)">18 STG x 17,89 cm x 28 cm</text>
</g>
</svg></body></html>
